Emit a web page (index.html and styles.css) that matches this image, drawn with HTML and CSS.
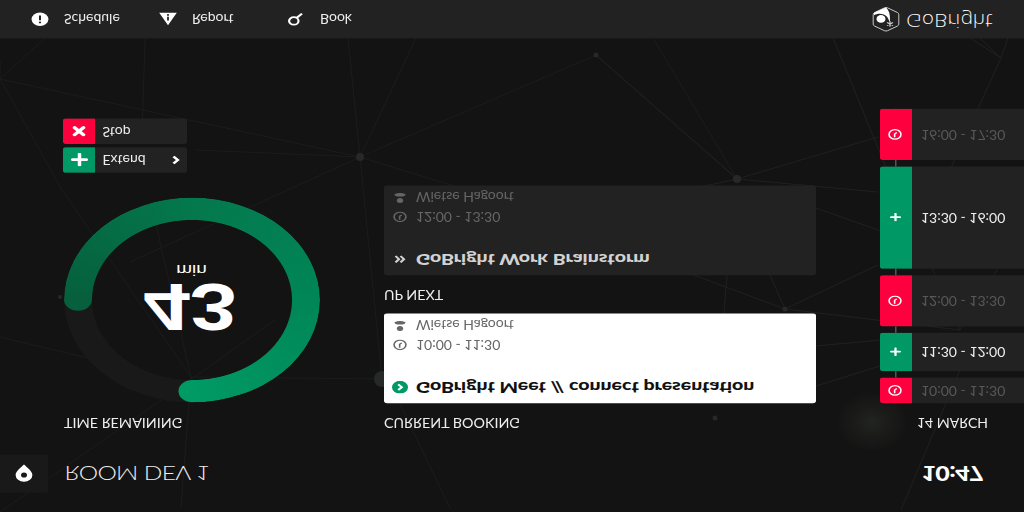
FILE: index.html
```html
<!DOCTYPE html>
<html lang="en">
<head>
<meta charset="utf-8">
<title>Room Dev 1</title>
<link rel="stylesheet" href="styles.css">
</head>
<body>
<svg class="defs" width="0" height="0">
  <symbol id="clock" viewBox="0 0 16 16"><circle cx="8" cy="8" r="6.800" fill="none" stroke="currentColor" stroke-width="1.800"/><path d="M7.600 3.800V8.600L10 10.800" fill="none" stroke="currentColor" stroke-width="1.800"/></symbol>
  <symbol id="person" viewBox="0 0 16 16"><circle cx="8" cy="4" r="3.600" fill="currentColor"/><path d="M1.500 12.800C2 10 5 9.400 8 9.400S14 10 14.500 12.800Q11 14.400 8 14.400T1.500 12.800Z" fill="currentColor"/></symbol>
  <symbol id="plus" viewBox="0 0 16 16"><path d="M8 1.500V14.500M1.500 8H14.500" stroke="currentColor" stroke-width="3.300" stroke-linecap="round"/></symbol>
</svg>
<div class="stage">
  <svg class="backdrop" viewBox="0 0 1024 640">
    <defs><radialGradient id="glow"><stop offset="0" stop-color="#222420"/><stop offset="1" stop-color="#222420" stop-opacity="0"/></radialGradient></defs>
    <g transform="matrix(1 0 0 -1.25 0 640)">
      <ellipse cx="872" cy="422" rx="36" ry="30" fill="url(#glow)"/>
      <g class="web">
        <path d="M348 38L360 157L416 38M360 157L596 55L737 179L653 38M360 157L0 79L45 38M360 157L196 150M360 157L130 262M360 157L457 187M360 157L382 379L191 377L181 507M191 377L155 220M191 377L62 190L0 79M145 38L142 140M0 337L88 358M0 512L190 380L275 320M398 400L451 510M0 79L0 60"/>
        <path class="bright" d="M596 55L737 179L878 137M737 179L878 192M737 179L700 187M816 208L878 230L960 260M833 38L885 165L960 330M980 38L1001 58L950 170M1008 38L1001 58L970 38M960 370L901 510M727 275L724 313M770 275L785 309L640 255M785 309L878 265M785 309L960 330L1000 265M816 346L880 340M816 386L880 366"/>
      </g>
      <g fill="#262927"><circle cx="360" cy="157" r="4"/><circle cx="737" cy="179" r="4"/><circle cx="596" cy="55" r="2.500"/><circle cx="382" cy="379" r="8"/><circle cx="715" cy="418" r="2.500"/><circle cx="785" cy="309" r="2.500"/><circle cx="60" cy="297" r="2"/></g>
    </g>
  </svg>
  <header class="top">
    <div class="badge"><svg width="18" height="23" viewBox="0 0 18 23"><path d="M9 22.500C7 20 .6 14.500 .6 9.200A8.400 8.400 0 0 1 17.400 9.200C17.400 14.500 11 20 9 22.500Z" fill="#fff"/><ellipse cx="9" cy="9.200" rx="3" ry="3.200" fill="#1a1a1a"/></svg></div>
    <h1 class="room">ROOM DEV 1</h1>
    <div class="time">10:47</div>
  </header>
  <main class="main">
    <section class="remaining">
      <h2 class="label">TIME REMAINING</h2>
      <div class="dial">
        <div class="ring"></div>
        <svg class="caps" viewBox="0 0 256 256"><path d="M128.500 0A14 14 0 0 0 128.500 28Z" fill="#009a65"/><path d="M0 128.500A14 14 0 0 1 28 128.500Z" fill="#065f3d"/></svg>
        <div class="count">43</div>
        <div class="unit">min</div>
      </div>
      <div class="buttons">
        <div class="button"><span class="key green"><svg class="i17"><use href="#plus"/></svg></span><span class="btext">Extend</span><svg class="chev" viewBox="0 0 8 12"><path d="M1.500 1.500L5.800 6L1.500 10.500" fill="none" stroke="#fff" stroke-width="2.800"/></svg></div>
        <div class="button"><span class="key red"><svg width="14" height="14" viewBox="0 0 14 14"><path d="M2.600 2.600L11.400 11.400M11.400 2.600L2.600 11.400" stroke="#fff" stroke-width="3.800" stroke-linecap="round"/></svg></span><span class="btext">Stop</span></div>
      </div>
    </section>
    <section class="bookings">
      <h2 class="label">CURRENT BOOKING</h2>
      <article class="card current">
        <div class="row title"><svg class="ic" viewBox="0 0 16 16"><circle cx="8" cy="8" r="8" fill="#009865"/><path d="M6.200 4.500L9.800 8L6.200 11.500" fill="none" stroke="#fff" stroke-width="2.300"/></svg><span>GoBright Meet // connect presentation</span></div>
        <div class="row meta when"><svg class="ic"><use href="#clock"/></svg><span>10:00 - 11:30</span></div>
        <div class="row meta"><svg class="ic"><use href="#person"/></svg><span>Wietse Hagoort</span></div>
      </article>
      <h2 class="label l-next">UP NEXT</h2>
      <article class="card next">
        <div class="row title"><svg class="ic" viewBox="0 0 16 16"><path d="M3.500 4L7 8L3.500 12M8.500 4L12 8L8.500 12" fill="none" stroke="#d2d2d2" stroke-width="2.300"/></svg><span>GoBright Work Brainstorm</span></div>
        <div class="row meta when"><svg class="ic"><use href="#clock"/></svg><span>12:00 - 13:30</span></div>
        <div class="row meta"><svg class="ic"><use href="#person"/></svg><span>Wietse Hagoort</span></div>
      </article>
    </section>
    <section class="agenda">
      <h2 class="label l-date">14 MARCH</h2>
      <div class="slots">
        <div class="slot busy h1"><span class="key red"><svg class="i14"><use href="#clock"/></svg></span><span class="range">10:00 - 11:30</span></div>
        <div class="slot h2"><span class="key green"><svg class="i11"><use href="#plus"/></svg></span><span class="range">11:30 - 12:00</span></div>
        <div class="slot busy h3"><span class="key red"><svg class="i14"><use href="#clock"/></svg></span><span class="range">12:00 - 13:30</span></div>
        <div class="slot h4"><span class="key green"><svg class="i11"><use href="#plus"/></svg></span><span class="range">13:30 - 16:00</span></div>
        <div class="slot busy h3"><span class="key red"><svg class="i14"><use href="#clock"/></svg></span><span class="range">16:00 - 17:30</span></div>
      </div>
    </section>
  </main>
  <footer class="bar">
    <div class="item"><svg width="18" height="18" viewBox="0 0 18 18"><circle cx="9" cy="9" r="8.400" fill="#fff"/><path d="M9 7.700V13.500" stroke="#222" stroke-width="2"/><circle cx="9" cy="5" r="1.200" fill="#222"/></svg><span>Schedule</span></div>
    <div class="item"><svg width="18" height="18" viewBox="0 0 18 18"><path d="M9 1.500L17.800 17H.2Z" fill="#fff"/><path d="M9 7.500V12" stroke="#222" stroke-width="1.800"/><circle cx="9" cy="14.300" r="1.100" fill="#222"/></svg><span>Report</span></div>
    <div class="item"><svg width="18" height="18" viewBox="0 0 18 18"><circle cx="6.800" cy="6.800" r="4.700" fill="none" stroke="#fff" stroke-width="2.200"/><path d="M9.500 10.500L15 16" stroke="#fff" stroke-width="2.300"/></svg><span>Book</span></div>
    <div class="brand">
      <svg width="28" height="32" viewBox="0 0 28 32"><path d="M12.500 1.600Q14 .8 15.500 1.600L25.500 7.500Q26.800 8.300 26.800 9.800V22Q26.800 23.500 25.500 24.300L15.500 30.200Q14 31 12.500 30.200L2.500 24.300Q1.200 23.500 1.200 22V9.800Q1.200 8.300 2.500 7.500Z" fill="none" stroke="#ddd" stroke-width="1"/><path d="M2 24V21C6 24 12 23.500 15 19C16.500 16.500 17 14 18 12.500C18 18 18.500 25 14 30.500L11.500 29.500Z" fill="#fff"/><ellipse cx="9" cy="16.300" rx="4.500" ry="4.800" fill="#fff"/><path d="M18 6.500V13.500M15 8.200L21 11.800M21 8.200L15 11.800" stroke="#ccc" stroke-width="1.300"/></svg>
      <span class="wordmark">GoBright</span>
    </div>
  </footer>
</div>
</body>
</html>
```
FILE: styles.css
```css
* { box-sizing: border-box; }
html { height: 512px; overflow: hidden; }
body { margin: 0; height: 512px; overflow: hidden; background: #131313; font-family: Lato, "Open Sans", sans-serif; font-size: 14px; }
h1, h2 { margin: 0; font-weight: 400; }
svg { flex: none; display: block; }
.defs { position: absolute; }
.stage { position: relative; width: 1024px; height: 640px; margin-bottom: -128px; display: flex; flex-direction: column; background: #131313; color: #eee; transform-origin: 0 0; transform: translateY(512px) scaleY(-0.8); }
.backdrop { position: absolute; inset: 0; width: 1024px; height: 640px; }
.web { fill: none; stroke: #1b1c1b; stroke-width: 1; }
.web .bright { stroke: #20211f; }
.top { position: relative; display: flex; align-items: center; height: 48px; margin-top: 24px; padding-right: 41px; }
.badge { width: 48px; height: 48px; background: #191919; border-radius: 0 3px 3px 0; display: flex; align-items: center; justify-content: center; }
.room { margin-left: 16.5px; font-size: 24.5px; font-weight: 300; line-height: 46px; letter-spacing: -0.65px; white-space: nowrap; }
.time { margin-left: auto; font-size: 25px; font-weight: 900; color: #fff; line-height: 48px; letter-spacing: -0.6px; }
.main { position: relative; display: flex; flex: 1; padding-top: 28px; }
/* small captions are drawn slightly condensed */
.label, .btext, .meta span, .range, .item span { transform: scaleY(1.12); }
.label { font-size: 14.3px; line-height: 24px; white-space: nowrap; }
.remaining { width: 321px; padding-left: 64px; }
.dial { position: relative; width: 256px; height: 256px; margin-top: 13px; text-align: center; font-family: "Liberation Sans", Arial, sans-serif; color: #fff; }
.ring { position: absolute; inset: 0; border-radius: 50%; background: conic-gradient(#009a65 0deg, #008658 90deg, #04784d 180deg, #065f3d 270deg, #191919 270deg); -webkit-mask: radial-gradient(circle, transparent 99.5px, #000 100.5px); mask: radial-gradient(circle, transparent 99.5px, #000 100.5px); }
.caps { position: absolute; inset: 0; width: 256px; height: 256px; }
.count { position: relative; padding-top: 88px; margin-right: 4px; font-size: 84px; font-weight: 700; line-height: 62px; }
.unit { position: relative; margin: 8px 1px 0 0; font-size: 19px; line-height: 16px; }
.buttons { display: flex; flex-direction: column; gap: 4px; margin: 31px 0 0 -1px; }
.button { display: flex; align-items: center; width: 124px; height: 32px; border-radius: 3px; background: #222; overflow: hidden; }
.key { display: flex; align-items: center; justify-content: center; align-self: stretch; width: 32px; color: #fff; flex: none; }
.red { background: #ff003f; }
.green { background: #009865; }
.i17 { width: 17px; height: 17px; }
.i14 { width: 14px; height: 14px; margin-right: 2px; }
.i11 { width: 11px; height: 11px; margin-right: 1px; }
.btext { margin: -2px 0 0 7.5px; }
.chev { width: 8px; height: 12px; margin: 0 7px 0 auto; }
.bookings { width: 432px; margin-left: 63px; }
.card { height: 112px; padding: 8px; border-radius: 3px; margin-top: 12px; }
.current { background: #fff; color: #111; }
.next { background: #222; color: #d2d2d2; }
.l-next { margin-top: 12px; }
.row { display: flex; align-items: center; gap: 8px; height: 24px; white-space: nowrap; }
.ic { width: 16px; height: 16px; }
.title { font-size: 19.5px; font-weight: 900; }
.title span { margin-top: -1px; }
.meta { color: #666; }
.when span { margin-top: -2px; }
.meta .ic { width: 14px; height: 14px; margin: 0 1px; }
.when { margin-top: 29px; }
.agenda { width: 144px; margin-left: 64px; }
.l-date { padding-left: 37px; font-size: 14px; }
.slots { display: flex; flex-direction: column; gap: 8px; margin-top: 12px; background: linear-gradient(#555, #555) 15px 0 / 1.5px 100% no-repeat; }
.slot { display: flex; align-items: center; background: #222; border-radius: 3px 0 0 3px; overflow: hidden; }
.h1 { height: 32px; } .h2 { height: 48px; } .h3 { height: 64px; } .h4 { height: 128px; }
.range { margin: -2px 0 0 9px; white-space: nowrap; }
.busy .range { color: #585858; }
.bar { position: relative; display: flex; align-items: center; height: 48px; padding-left: 31px; background: #222; }
.item { display: flex; align-items: center; gap: 15px; width: 128px; }
.brand { display: flex; align-items: center; gap: 6px; margin: 0 31.5px 0 auto; }
.wordmark { font-family: "DejaVu Sans", sans-serif; font-weight: 200; font-size: 21px; letter-spacing: -0.6px; color: #fff; }
```
